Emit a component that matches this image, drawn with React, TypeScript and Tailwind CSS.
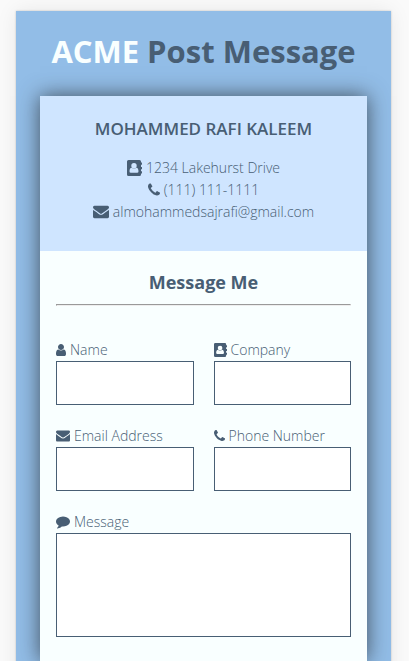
import type { ReactNode } from "react";

function Glyph({ box, path, className }: { box: string; path: string; className: string }) {
  return (
    <svg viewBox={box} className={className} fill="currentColor" aria-hidden="true">
      <path d={path} />
    </svg>
  );
}

function AddressBook({ className }: { className: string }) {
  return (
    <svg viewBox="0 0 15 16" className={className} fill="currentColor" aria-hidden="true">
      <path
        fillRule="evenodd"
        d="M1.5 0h11Q14 0 14 1.5V2.500h.8q.2 0 .2.3v1.700q0 .3-.2.3H14V6.900h.8q.2 0 .2.3v1.700q0 .3-.2.3H14V11.300h.8q.2 0 .2.3v1.700q0 .3-.2.3H14V14.500Q14 16 12.500 16H1.500Q0 16 0 14.500V1.500Q0 0 1.500 0ZM7 3a2.700 2.700 0 1 0 0 5.400A2.700 2.700 0 1 0 7 3ZM4.700 7.700C3.200 7.900 2.500 9.300 2.500 11.200Q2.500 12.700 3.800 12.700H10.200Q11.500 12.700 11.500 11.200C11.500 9.300 10.800 7.900 9.300 7.700Q8.300 8.700 7 8.700T4.700 7.700Z"
      />
    </svg>
  );
}

const userPath =
  "M1536 1399q0 109-62.5 187t-150.5 78h-854q-88 0-150.5-78t-62.5-187q0-85 8.5-160.5t31.5-152 58.5-131 94-89 134.5-34.5q131 128 313 128t313-128q76 0 134.5 34.5t94 89 58.5 131 31.5 152 8.5 160.5zm-256-887q0 159-112.5 271.5t-271.5 112.5-271.5-112.5-112.5-271.5 112.5-271.5 271.5-112.5 271.5 112.5 112.5 271.5z";
const phonePath =
  "M1600 1240q0 27-10 70.5t-21 68.5q-21 50-122 106-94 51-186 51-27 0-53-3.5t-57.5-12.5-47-14.5-55.5-20.5-49-18q-98-35-175-83-127-79-264-216t-216-264q-48-77-83-175-3-9-18-49t-20.5-55.5-14.5-47-12.5-57.5-3.5-53q0-92 51-186 56-101 106-122 25-11 68.5-21t70.5-10q14 0 21 3 18 6 53 76 11 19 30 54t35 63.5 31 53.5q3 4 17.5 25t21.5 35.5 7 28.5q0 20-28.5 50t-62 55-62 53-28.5 46q0 9 5 22.5t8.5 20.5 14 24 11.5 19q76 137 174 235t235 174q2 1 19 11.5t24 14 20.5 8.5 22.5 5q18 0 46-28.5t53-62 55-62 50-28.5q14 0 28.5 7t35.5 21.5 25 17.5q25 15 53.5 31t63.5 35 54 30q70 35 76 53 3 7 3 21z";
const envelopePath =
  "M1792 710v794q0 66-47 113t-113 47h-1472q-66 0-113-47t-47-113v-794q44 49 101 87 362 246 497 345 57 42 92.5 65.5t94.5 48 110 24.5h2q51 0 110-24.5t94.5-48 92.5-65.5q170-123 498-345 57-39 100-87zm0-294q0 79-49 151t-122 123q-376 261-468 325-10 7-42.5 31t-54 38.5-52 32.5-57.5 27-50 9h-2q-23 0-50-9t-57.5-27-52-32.5-54-38.5-42.5-31q-91-64-262-182.5t-205-142.5q-62-42-117-115.5t-55-136.5q0-78 41.5-130t118.5-52h1472q65 0 112.5 47t47.5 113z";
const commentPath =
  "M1792 896q0 174-120 321.5t-326 233-450 85.5q-70 0-145-8-198 175-460 242-49 14-114 22-17 2-30.5-9t-17.5-29v-1q-3-4-.5-12t2-10 4.5-9.5l6-9 7-8.5 8-9q7-8 31-34.5t34.5-38 31-39.5 32.5-51 27-59 26-76q-157-89-247.5-220t-90.5-281q0-130 71-248.5t191-204.5 286-136.5 348-50.5q244 0 450 85.5t326 233 120 321.5z";

function Field({
  id,
  label,
  icon,
  type,
}: {
  id: string;
  label: string;
  icon: ReactNode;
  type: string;
}) {
  return (
    <div>
      <label htmlFor={id} className="flex h-[22px] items-center gap-1">
        {icon}
        {label}
      </label>
      <input
        id={id}
        name={id}
        type={type}
        className="block h-11 w-full border border-[#485e74] bg-white px-3 outline-none"
      />
    </div>
  );
}

export default function App() {
  return (
    <div className="h-screen overflow-hidden bg-[#fafafa] pt-[11px] pr-[18px] pl-4 font-['Open_Sans','Noto_Sans',sans-serif] text-sm font-[340] text-[#485e74]">
      <main className="min-h-screen bg-[#92bde7] px-6 pb-6 shadow-[0_0_20px_rgba(0,0,0,0.08),0_0_2px_rgba(0,0,0,0.2)]">
        <h1 className="flex h-[85px] items-center justify-center gap-2 pb-1 text-[31px] font-bold whitespace-nowrap">
          <span className="text-[#f9ffff]">ACME</span>
          <span>Post Message</span>
        </h1>
        <div className="bg-[#f9ffff] shadow-[0_0_20px_0_rgba(57,66,77,0.9)]">
          <section className="h-[155px] bg-[#cfe5ff] pt-5 text-center">
            <h2 className="text-[17px] leading-[26px] font-semibold">MOHAMMED RAFI KALEEM</h2>
            <ul className="mt-[15px] leading-[22px]">
              <li className="flex items-center justify-center gap-1">
                <AddressBook className="h-4 w-[15px]" />
                1234 Lakehurst Drive
              </li>
              <li className="flex items-center justify-center gap-1">
                <Glyph box="192 128 1408 1536" path={phonePath} className="h-[14px] w-3" />
                (111) 111-1111
              </li>
              <li className="flex items-center justify-center gap-1">
                <Glyph box="0 128 1792 1664" path={envelopePath} className="size-4" />
                almohammedsajrafi@gmail.com
              </li>
            </ul>
          </section>
          <section className="px-4 pt-[17px] pb-6">
            <h2 className="text-center text-lg leading-7 font-bold">Message Me</h2>
            <hr className="mt-2 h-[2px] border border-[#9a9a9a] border-r-[#eeeeee] border-b-[#eeeeee]" />
            <form className="mt-[33px] grid grid-cols-2 gap-5">
              <Field
                id="name"
                label="Name"
                type="text"
                icon={<Glyph box="256 128 1280 1536" path={userPath} className="h-3 w-[10px]" />}
              />
              <Field
                id="company"
                label="Company"
                type="text"
                icon={<AddressBook className="h-[14px] w-[13px]" />}
              />
              <Field
                id="email"
                label="Email Address"
                type="email"
                icon={<Glyph box="0 128 1792 1664" path={envelopePath} className="size-[14px]" />}
              />
              <Field
                id="phone"
                label="Phone Number"
                type="tel"
                icon={<Glyph box="192 128 1408 1536" path={phonePath} className="h-3 w-[11px]" />}
              />
              <div className="col-span-2">
                <label htmlFor="message" className="flex h-[22px] items-center gap-1">
                  <Glyph box="0 128 1792 1664" path={commentPath} className="size-[14px]" />
                  Message
                </label>
                <textarea
                  id="message"
                  name="message"
                  className="block h-[104px] w-full resize-none border border-[#485e74] bg-white p-3 outline-none"
                />
              </div>
            </form>
          </section>
        </div>
      </main>
    </div>
  );
}
